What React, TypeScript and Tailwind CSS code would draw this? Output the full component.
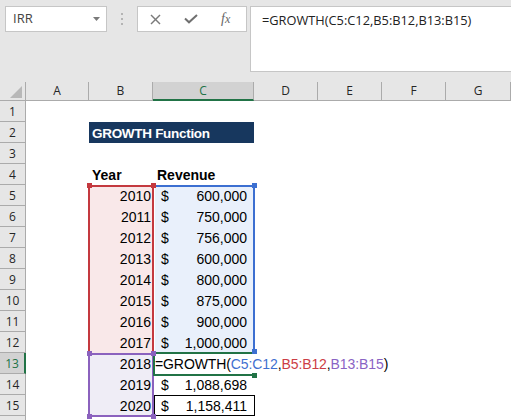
import React from "react";

function RowHead({ n, sel }: { n?: number; sel?: boolean }) {
  if (sel) {
    return (
      <div className="w-[26px] shrink-0 h-full flex items-center justify-center pt-[2px] bg-[#d2d2d2] border-b border-b-[#ababab] border-r-2 border-r-[#217346] text-[#217346] text-[12px] font-['Open_Sans',sans-serif]">
        {n}
      </div>
    );
  }
  return (
    <div className="w-[26px] shrink-0 h-full flex items-center justify-center pt-[2px] bg-[#e6e6e6] border-b border-r border-[#ababab] text-[#262626] text-[12px] font-['Open_Sans',sans-serif]">
      {n}
    </div>
  );
}

function Row({ n, sel, children }: { n?: number; sel?: boolean; children?: React.ReactNode }) {
  return (
    <div className="flex h-[21px]">
      <RowHead n={n} sel={sel} />
      {children}
    </div>
  );
}

const data: [number, string][] = [
  [2010, "600,000"],
  [2011, "750,000"],
  [2012, "756,000"],
  [2013, "600,000"],
  [2014, "800,000"],
  [2015, "875,000"],
  [2016, "900,000"],
  [2017, "1,000,000"],
];

function ColHead({ label, w, sel }: { label: string; w: string; sel?: boolean }) {
  return (
    <div
      className={
        sel
          ? `${w} shrink-0 h-full flex items-center justify-center bg-[#d2d2d2] border-r border-r-[#ababab] border-b-2 border-b-[#217346] text-[#217346] text-[12px]`
          : `${w} shrink-0 h-full flex items-center justify-center bg-[#e6e6e6] border-r border-b border-[#ababab] text-[#262626] text-[12px]`
      }
    >
      {label}
    </div>
  );
}

export default function App() {
  return (
    <div className="relative w-[511px] h-[420px] overflow-hidden bg-white">
      {/* Toolbar / formula bar */}
      <div className="h-[82px] bg-[#e6e6e6] flex items-start pt-[6px] font-['Open_Sans',sans-serif]">
        <div className="ml-[5px] w-[102px] h-[26px] shrink-0 bg-white border border-[#c6c6c6] flex items-center justify-between pl-[7px] pr-[6px]">
          <span className="text-[13px] text-[#444]">IRR</span>
          <svg width="7" height="4" viewBox="0 0 7 4">
            <polygon points="0,0 7,0 3.5,4" fill="#7a7a7a" />
          </svg>
        </div>
        <div className="w-[30px] h-[26px] shrink-0 flex flex-col items-center justify-center gap-[3px]">
          <div className="w-[2px] h-[2px] bg-[#b4b4b4]" />
          <div className="w-[2px] h-[2px] bg-[#b4b4b4]" />
          <div className="w-[2px] h-[2px] bg-[#b4b4b4]" />
        </div>
        <div className="w-[110px] h-[26px] shrink-0 bg-white border border-[#c6c6c6] flex items-center pl-[12px]">
          <svg width="11" height="11" viewBox="0 0 11 11">
            <line x1="1" y1="1" x2="10" y2="10" stroke="#7a7a7a" strokeWidth="1.4" />
            <line x1="10" y1="1" x2="1" y2="10" stroke="#7a7a7a" strokeWidth="1.4" />
          </svg>
          <svg className="ml-[23px]" width="14" height="10" viewBox="0 0 14 10">
            <polyline points="1,4.5 5,8.3 13,1" fill="none" stroke="#707070" strokeWidth="2" />
          </svg>
          <span className="ml-[23px] italic font-['Liberation_Serif',serif] text-[14px] leading-[14px] text-[#666]">
            f<span className="text-[12px]">x</span>
          </span>
        </div>
        <div className="ml-[3px] flex-1 h-[66px] bg-white border border-r-0 border-[#c6c6c6] pl-[11px] pt-[5px] text-[12.8px] leading-[16px] text-[#222] whitespace-nowrap">
          =GROWTH(C5:C12,B5:B12,B13:B15)
        </div>
      </div>

      {/* Column headers */}
      <div className="flex h-[19px] font-['Open_Sans',sans-serif]">
        <div className="relative w-[26px] shrink-0 h-full bg-[#e6e6e6] border-r border-b border-[#ababab]">
          <svg className="absolute right-[3px] bottom-[2px]" width="12" height="12" viewBox="0 0 12 12">
            <polygon points="12,0 12,12 0,12" fill="#b8b8b8" />
          </svg>
        </div>
        <ColHead label="A" w="w-[63px]" />
        <ColHead label="B" w="w-[64px]" />
        <ColHead label="C" w="w-[101px]" sel />
        <ColHead label="D" w="w-[64px]" />
        <ColHead label="E" w="w-[64px]" />
        <ColHead label="F" w="w-[64px]" />
        <ColHead label="G" w="w-[65px]" />
      </div>

      {/* Sheet rows */}
      <div className="font-['Liberation_Sans',Arial,sans-serif] text-[14px] text-black">
        <Row n={1} />
        <Row n={2}>
          <div className="w-[63px] shrink-0" />
          <div className="w-[165px] shrink-0 bg-[#17375e] text-white font-bold pl-[3px] text-[13.5px] tracking-[-0.3px] leading-[23px] whitespace-nowrap">
            GROWTH Function
          </div>
        </Row>
        <Row n={3} />
        <Row n={4}>
          <div className="w-[63px] shrink-0" />
          <div className="w-[64px] shrink-0 font-bold pl-[3px] leading-[23px]">Year</div>
          <div className="w-[101px] shrink-0 font-bold pl-[4px] leading-[23px]">Revenue</div>
        </Row>
        {data.map(([y, v], i) => (
          <Row key={y} n={i + 5}>
            <div className="w-[63px] shrink-0" />
            <div className="w-[64px] shrink-0 bg-[#f9e8e9] text-right pr-[2px] leading-[23px]">{y}</div>
            <div className="w-[101px] shrink-0 bg-[#e9f0fb] border-l-2 border-white flex justify-between pl-[6px] pr-[7px] leading-[23px]">
              <span>$</span>
              <span>{v}</span>
            </div>
          </Row>
        ))}
        <Row n={13} sel>
          <div className="w-[63px] shrink-0" />
          <div className="w-[64px] shrink-0 bg-[#efedf6] text-right pr-[2px] leading-[23px]">2018</div>
          <div className="w-[101px] shrink-0 pl-[2px] leading-[23px] whitespace-nowrap tracking-[-0.1px] flex items-start">
            <span>=GROWTH(</span>
            <span className="text-[#3f6fd0]">C5:C12</span>
            <span>,</span>
            <span className="text-[#cc3d45]">B5:B12</span>
            <span>,</span>
            <span className="text-[#8a63c4]">B13:B15</span>
            <span>)</span>
            <span className="ml-[2px] mt-[3px] w-[1px] h-[16px] bg-black" />
          </div>
        </Row>
        <Row n={14}>
          <div className="w-[63px] shrink-0" />
          <div className="w-[64px] shrink-0 bg-[#efedf6] text-right pr-[2px] leading-[23px]">2019</div>
          <div className="w-[101px] shrink-0 flex justify-between pl-[8px] pr-[7px] leading-[23px]">
            <span>$</span>
            <span>1,088,698</span>
          </div>
        </Row>
        <Row n={15}>
          <div className="w-[63px] shrink-0" />
          <div className="w-[64px] shrink-0 bg-[#efedf6] text-right pr-[2px] leading-[23px]">2020</div>
          <div className="w-[101px] shrink-0 flex justify-between pl-[8px] pr-[7px] leading-[23px]">
            <span>$</span>
            <span>1,158,411</span>
          </div>
        </Row>
        <Row />
      </div>

      {/* Range highlight overlays */}
      <div className="absolute left-[153px] top-[185px] w-[102px] h-[168px] border-2 border-l-0 border-b-0 border-[#3c6fd1] pointer-events-none" />
      <div className="absolute left-[88px] top-[185px] w-[66px] h-[168px] border-2 border-b-0 border-[#c4393f] pointer-events-none" />
      <div className="absolute left-[88px] top-[353px] w-[66px] h-[64px] border-2 border-[#8b62be] pointer-events-none" />
      <div className="absolute left-[153px] top-[352px] w-[101px] h-[24px] border-2 border-r-0 border-[#217346] pointer-events-none" />
      <div className="absolute left-[154px] top-[395px] w-[101px] h-[21px] border border-black pointer-events-none" />

      {/* Corner squares */}
      <div className="absolute left-[87px] top-[183px] w-[5px] h-[5px] bg-[#c4393f]" />
      <div className="absolute left-[151px] top-[183px] w-[5px] h-[5px] bg-[#c4393f]" />
      <div className="absolute left-[252px] top-[183px] w-[5px] h-[5px] bg-[#3c6fd1]" />
      <div className="absolute left-[252px] top-[349px] w-[5px] h-[5px] bg-[#3c6fd1]" />
      <div className="absolute left-[87px] top-[351px] w-[5px] h-[5px] bg-[#8b62be]" />
      <div className="absolute left-[151px] top-[351px] w-[5px] h-[5px] bg-[#8b62be]" />
      <div className="absolute left-[87px] top-[414px] w-[5px] h-[5px] bg-[#8b62be]" />
      <div className="absolute left-[151px] top-[414px] w-[5px] h-[5px] bg-[#8b62be]" />
      <div className="absolute left-[252px] top-[373px] w-[5px] h-[5px] bg-[#217346]" />
    </div>
  );
}
